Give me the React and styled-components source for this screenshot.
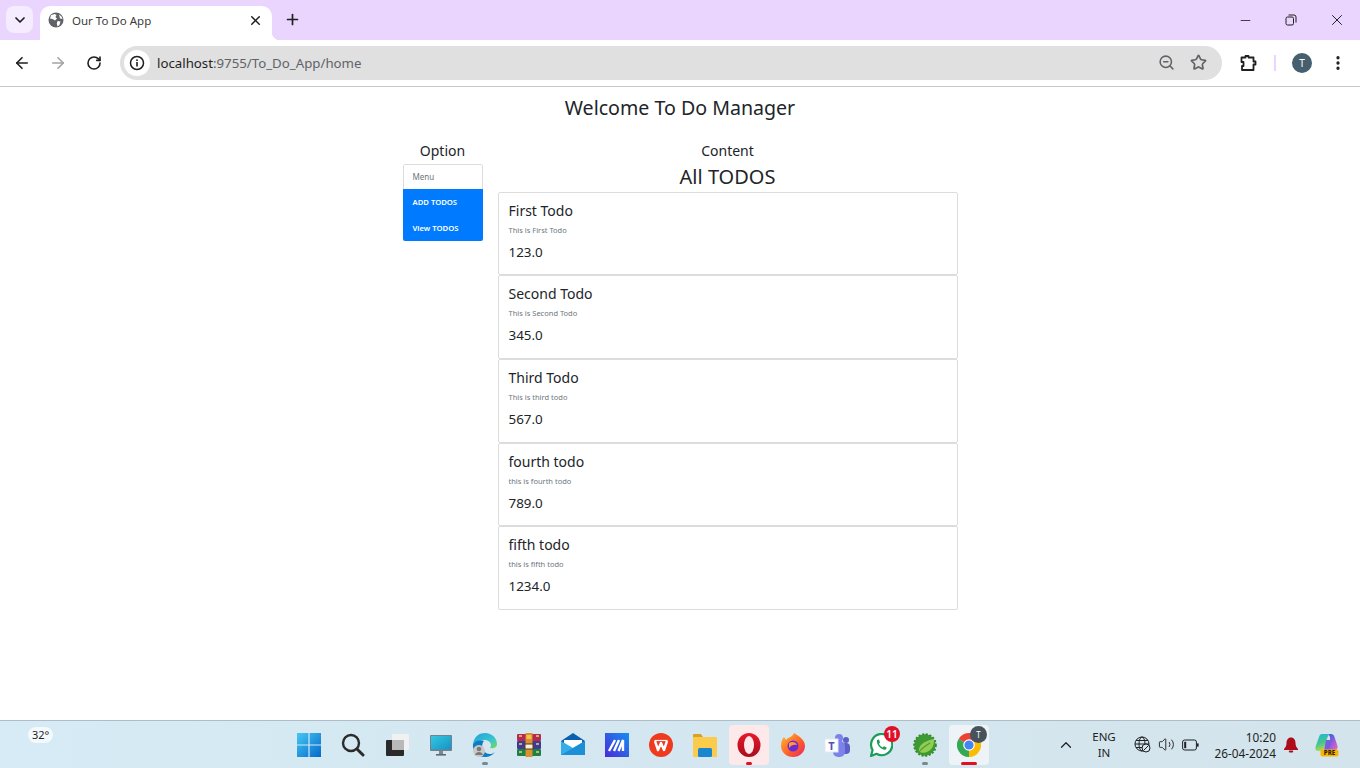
import React from 'react'
import styled, { createGlobalStyle } from 'styled-components'
import { ArrowLeft, ArrowRight, RotateCw, Star, ZoomOut, EllipsisVertical, Plus, X, Minus, ChevronDown, ChevronUp, Volume2 } from 'lucide-react'

const GlobalStyle = createGlobalStyle`
    html, body {
        margin: 0;
        padding: 0;
        background: #fff;
        font-family: "Noto Sans", "Open Sans", "Liberation Sans", sans-serif;
        color: #212529;
    }
`

const todos = [
    { title: 'First Todo', text: 'This is First Todo', price: '123.0' },
    { title: 'Second Todo', text: 'This is Second Todo', price: '345.0' },
    { title: 'Third Todo', text: 'This is third todo', price: '567.0' },
    { title: 'fourth todo', text: 'this is fourth todo', price: '789.0' },
    { title: 'fifth todo', text: 'this is fifth todo', price: '1234.0' },
]

export default function App() {
    return (
        <Screen>
            <GlobalStyle />
            <TabStrip>
                <TabSearch><ChevronDown size={16} strokeWidth={2.6} color="#1f1f1f" /></TabSearch>
                <Tab>
                    <GlobeFilled />
                    <TabTitle>Our To Do App</TabTitle>
                    <X size={15} strokeWidth={2.4} color="#1f1f1f" />
                </Tab>
                <NewTab><Plus size={17} strokeWidth={2.4} color="#1f1f1f" /></NewTab>
                <WindowControls>
                    <WindowButton><Minus size={15} strokeWidth={1.3} color="#1f1f1f" /></WindowButton>
                    <WindowButton><RestoreIcon /></WindowButton>
                    <WindowButton><X size={18} strokeWidth={1.3} color="#1f1f1f" /></WindowButton>
                </WindowControls>
            </TabStrip>
            <Toolbar>
                <NavButton><ArrowLeft size={18} strokeWidth={2.2} color="#1f1f1f" /></NavButton>
                <NavButton><ArrowRight size={18} strokeWidth={2.2} color="#a3a3a3" /></NavButton>
                <NavButton><RotateCw size={16} strokeWidth={2.4} color="#1f1f1f" /></NavButton>
                <Omnibox>
                    <InfoChip><InfoIcon /></InfoChip>
                    <Url>localhost<UrlRest>:9755/To_Do_App/home</UrlRest></Url>
                    <OmniIcon><ZoomOut size={17} strokeWidth={2.2} color="#5f6368" /></OmniIcon>
                    <OmniIcon><Star size={17} strokeWidth={2.4} color="#5f6368" /></OmniIcon>
                </Omnibox>
                <ExtensionSlot><PuzzleIcon /></ExtensionSlot>
                <Separator />
                <Avatar>T</Avatar>
                <MenuSlot><EllipsisVertical size={18} strokeWidth={2.4} color="#1f1f1f" /></MenuSlot>
            </Toolbar>

            <Page>
                <Heading>Welcome To Do Manager</Heading>
                <Columns>
                    <OptionColumn>
                        <ColumnTitle>Option</ColumnTitle>
                        <Menu>
                            <MenuItem>Menu</MenuItem>
                            <MenuItem $active>ADD TODOS</MenuItem>
                            <MenuItem $active>View TODOS</MenuItem>
                        </Menu>
                    </OptionColumn>
                    <ContentColumn>
                        <ColumnTitle>Content</ColumnTitle>
                        <ListTitle>All TODOS</ListTitle>
                        <CardList>
                            {todos.map((todo) => (
                                <Card key={todo.title}>
                                    <CardTitle>{todo.title}</CardTitle>
                                    <CardText>{todo.text}</CardText>
                                    <CardPrice>{todo.price}</CardPrice>
                                </Card>
                            ))}
                        </CardList>
                    </ContentColumn>
                </Columns>
            </Page>

            <Taskbar>
                <Weather><WeatherPill>32°</WeatherPill></Weather>
                <TaskIcons>
                    <TaskButton><WindowsIcon /></TaskButton>
                    <TaskButton><SearchIcon /></TaskButton>
                    <TaskButton><TaskViewIcon /></TaskButton>
                    <TaskButton><MonitorIcon /></TaskButton>
                    <TaskButton><EdgeIcon /><Running /></TaskButton>
                    <TaskButton><RarIcon /></TaskButton>
                    <TaskButton><MailIcon /></TaskButton>
                    <TaskButton><MaIcon /></TaskButton>
                    <TaskButton><WpsIcon /></TaskButton>
                    <TaskButton><FolderIcon /></TaskButton>
                    <TaskButton $tint="#fde8ea"><OperaIcon /><Running $red /></TaskButton>
                    <TaskButton><FirefoxIcon /></TaskButton>
                    <TaskButton><TeamsIcon /></TaskButton>
                    <TaskButton><WhatsappIcon /><CountBadge>11</CountBadge></TaskButton>
                    <TaskButton><SpringIcon /><Running /></TaskButton>
                    <TaskButton $tint="#eef3f7"><ChromeIcon /><ChromeBadge>T</ChromeBadge><Running $red $wide /></TaskButton>
                </TaskIcons>
                <Tray>
                    <TrayChevron><ChevronUp size={18} strokeWidth={1.6} color="#1f1f1f" /></TrayChevron>
                    <Lang>ENG<br />IN</Lang>
                    <TrayGroup>
                        <NetIcon />
                        <Volume2 size={17} strokeWidth={1.3} color="#1f1f1f" />
                        <BatteryIcon />
                    </TrayGroup>
                    <Clock>10:20<br />26-04-2024</Clock>
                    <BellIcon />
                    <CopilotSlot><CopilotIcon /></CopilotSlot>
                </Tray>
            </Taskbar>
        </Screen>
    )
}

const GlobeFilled = () => (
    <svg width="16" height="16" viewBox="0 0 16 16">
        <circle cx="8" cy="8" r="7.5" fill="#5f6368" />
        <path d="M3 3.2 L6.5 2 L8.5 3 L7.5 5 L9 6.5 L7 8.5 L4.5 7 L2 6.5 Z M9.5 9 L12.5 9.5 L11.5 13 L9.5 14.5 L8.8 11.5 Z M11 2.5 L13.5 4.5 L14.5 7 L12 6.5 Z" fill="#fff" />
    </svg>
)

const RestoreIcon = () => (
    <svg width="12" height="12" viewBox="0 0 12 12" fill="none" stroke="#1f1f1f" strokeWidth="1">
        <rect x="1" y="3" width="7.5" height="8" rx="1.5" />
        <path d="M3.5 1 H9 A2 2 0 0 1 11 3 V8.5" />
    </svg>
)

const InfoIcon = () => (
    <svg width="16" height="16" viewBox="0 0 16 16" fill="none">
        <circle cx="8" cy="8" r="6.5" stroke="#1f1f1f" strokeWidth="1.5" />
        <rect x="7.2" y="7" width="1.6" height="4.5" fill="#1f1f1f" />
        <rect x="7.2" y="4.4" width="1.6" height="1.6" fill="#1f1f1f" />
    </svg>
)

const PuzzleIcon = () => (
    <svg width="18" height="18" viewBox="0 0 18 18" fill="none" stroke="#1f1f1f" strokeWidth="1.8" strokeLinejoin="round">
        <path d="M2.5 3.5 H6.5 V2 H9.5 V3.5 H14.5 V7.5 H16.5 V10.5 H14.5 V16 H3 V12 H4.5 V8 H2.5 Z" />
    </svg>
)

const WindowsIcon = () => (
    <svg width="24" height="24" viewBox="0 0 24 24">
        <defs>
            <linearGradient id="win" x1="0" y1="0" x2="1" y2="1">
                <stop offset="0" stopColor="#45c8f6" />
                <stop offset="1" stopColor="#0469c9" />
            </linearGradient>
        </defs>
        <path d="M0 0 H11.4 V11.4 H0 Z M12.6 0 H24 V11.4 H12.6 Z M0 12.6 H11.4 V24 H0 Z M12.6 12.6 H24 V24 H12.6 Z" fill="url(#win)" />
    </svg>
)

const SearchIcon = () => (
    <svg width="24" height="24" viewBox="0 0 24 24" fill="none" stroke="#2b2b2b">
        <circle cx="10" cy="10" r="8" strokeWidth="2.4" />
        <path d="M16 16 L22 22" strokeWidth="3" strokeLinecap="round" />
    </svg>
)

const TaskViewIcon = () => (
    <svg width="24" height="24" viewBox="0 0 24 24">
        <rect x="1" y="7" width="18" height="16" rx="1" fill="#2a2a2a" />
        <rect x="7" y="1" width="17" height="16" rx="1" fill="#f1f1f1" />
        <rect x="7" y="7" width="12" height="10" fill="#b9b9b9" />
    </svg>
)

const MonitorIcon = () => (
    <svg width="24" height="24" viewBox="0 0 24 24">
        <defs>
            <linearGradient id="mon" x1="0" y1="0" x2="1" y2="1">
                <stop offset="0" stopColor="#35c7e0" />
                <stop offset="1" stopColor="#1593c6" />
            </linearGradient>
        </defs>
        <rect x="1" y="2" width="22" height="16" rx="1" fill="#75808a" />
        <rect x="2" y="3" width="20" height="13.5" fill="url(#mon)" />
        <rect x="10" y="18" width="4" height="3" fill="#7c8790" />
        <rect x="7" y="21" width="10" height="1.6" fill="#5f6a73" />
    </svg>
)

const EdgeIcon = () => (
    <svg width="26" height="26" viewBox="0 0 26 26">
        <defs>
            <linearGradient id="edg" x1="0" y1="0" x2="1" y2="1">
                <stop offset="0" stopColor="#1f9fd8" />
                <stop offset="0.6" stopColor="#37c6d0" />
                <stop offset="1" stopColor="#7ed957" />
            </linearGradient>
        </defs>
        <path d="M1 12 C2 4 8 1 13 1 C20 1 25 6 25 12 C25 16 21 17 18 16 C21 12 17 8 13 8 C7 8 3 10 1 12 Z" fill="url(#edg)" />
        <path d="M1 12 C3 9 8 7 12 9 C9 12 10 18 14 21 C17 23 21 22 23 20 C20 24 16 25 13 25 C6 25 0 19 1 12 Z" fill="#0c7cc4" />
        <circle cx="7" cy="19" r="6" fill="#c9c9c9" />
        <circle cx="7" cy="17" r="2.3" fill="#7a7a7a" />
        <path d="M3 23 C4 19 10 19 11 23 Z" fill="#7a7a7a" />
    </svg>
)

const RarIcon = () => (
    <svg width="24" height="24" viewBox="0 0 24 24">
        <rect x="0" y="1" width="24" height="7" rx="1" fill="#b32b4f" />
        <rect x="0" y="8" width="24" height="8" rx="1" fill="#3f3a94" />
        <rect x="0" y="16" width="24" height="7" rx="1" fill="#1f7f45" />
        <path d="M2 3 H5 M19 3 H22 M2 11 H5 M19 11 H22 M2 19 H5 M19 19 H22" stroke="#e6d27a" strokeWidth="1.4" />
        <rect x="8.5" y="0" width="7" height="24" fill="#d9922f" />
        <rect x="9.5" y="2" width="5" height="4" fill="#f0c34a" />
        <rect x="8" y="11" width="8" height="5" fill="#f5efe0" stroke="#5a3a12" strokeWidth="1" />
    </svg>
)

const MailIcon = () => (
    <svg width="24" height="24" viewBox="0 0 24 24">
        <path d="M0 8 L12 0 L24 8 V10 H0 Z" fill="#0a5fae" />
        <path d="M3 7 H21 V13 L12 18 L3 13 Z" fill="#fff" />
        <path d="M0 8 L12 15 L24 8 V22 H0 Z" fill="#33aee8" />
        <path d="M0 22 L24 8 V22 Z" fill="#1d8fd4" />
    </svg>
)

const MaIcon = () => (
    <svg width="24" height="24" viewBox="0 0 24 24">
        <defs>
            <linearGradient id="ma" x1="0" y1="1" x2="1" y2="0">
                <stop offset="0" stopColor="#4a2bd9" />
                <stop offset="1" stopColor="#1590f0" />
            </linearGradient>
        </defs>
        <rect width="24" height="24" fill="url(#ma)" />
        <path d="M4 18 L10 7 M9 18 L14 7 M13.5 18 L18 7 V18" fill="none" stroke="#fff" strokeWidth="2.4" />
    </svg>
)

const WpsIcon = () => (
    <svg width="24" height="24" viewBox="0 0 24 24">
        <circle cx="12" cy="12" r="12" fill="#ee3b1f" />
        <path d="M6 8 L9 17 L12 10 L15 17 L18 8" fill="none" stroke="#fff" strokeWidth="2.4" strokeLinejoin="round" />
        <path d="M5.5 7.5 H18.5" stroke="#fff" strokeWidth="1.2" />
    </svg>
)

const FolderIcon = () => (
    <svg width="24" height="24" viewBox="0 0 24 24">
        <path d="M0 2 A1 1 0 0 1 1 1 H8 L10 4 V8 H0 Z" fill="#d9a321" />
        <rect x="0" y="4" width="24" height="20" rx="1" fill="#fbcb4c" />
        <rect x="5" y="15" width="14" height="9" rx="1.5" fill="#1a86d0" />
    </svg>
)

const OperaIcon = () => (
    <svg width="24" height="24" viewBox="0 0 24 24">
        <defs>
            <linearGradient id="ope" x1="0" y1="0" x2="0" y2="1">
                <stop offset="0" stopColor="#e8182a" />
                <stop offset="1" stopColor="#a80d1c" />
            </linearGradient>
        </defs>
        <ellipse cx="12" cy="12" rx="11.5" ry="12" fill="url(#ope)" />
        <ellipse cx="12" cy="12" rx="5" ry="9" fill="#fde8ea" />
    </svg>
)

const FirefoxIcon = () => (
    <svg width="24" height="24" viewBox="0 0 24 24">
        <defs>
            <linearGradient id="ffx" x1="0" y1="0" x2="1" y2="1">
                <stop offset="0" stopColor="#ffbd2e" />
                <stop offset="0.6" stopColor="#ff5a2b" />
                <stop offset="1" stopColor="#e3246e" />
            </linearGradient>
        </defs>
        <path d="M13 0 C18 3 24 7 24 13 A12 11 0 0 1 0 13 C0 9 1 6 3 4 L5 7 C7 4 12 4 13 0 Z" fill="url(#ffx)" />
        <circle cx="12" cy="13" r="5.5" fill="#6b2bd1" />
        <path d="M8 10 C11 8 15 9 16 12 C13 11 10 12 8 15 Z" fill="#ff9a3c" />
    </svg>
)

const TeamsIcon = () => (
    <svg width="26" height="24" viewBox="0 0 26 24">
        <circle cx="15" cy="5" r="4" fill="#7b83eb" />
        <circle cx="22" cy="7" r="3" fill="#5b5fc7" />
        <rect x="17" y="10" width="9" height="11" rx="4" fill="#5b5fc7" />
        <rect x="9" y="8" width="12" height="16" rx="5" fill="#7b83eb" />
        <rect x="1" y="6" width="13" height="13" fill="#fff" stroke="#e4e6f7" />
        <text x="7.5" y="16.5" fontSize="11" fontWeight="700" fontFamily="Noto Sans" textAnchor="middle" fill="#4b53bc">T</text>
    </svg>
)

const WhatsappIcon = () => (
    <svg width="24" height="24" viewBox="0 0 24 24" fill="none">
        <path d="M2 23 L3.6 17 A10.6 10.6 0 1 1 7.5 20.8 Z" stroke="#1b9c58" strokeWidth="2.2" strokeLinejoin="round" fill="#fff" />
        <path d="M8 7 L10 6.6 L11 9.4 L10 10.8 C10.8 12.6 12 13.8 13.6 14.4 L15 13.2 L17.6 14.6 L17 16.6 C12.6 17.6 7 12 8 7 Z" fill="#1b9c58" />
    </svg>
)

const SpringIcon = () => (
    <svg width="24" height="24" viewBox="0 0 24 24">
        <circle cx="12" cy="12" r="10.6" fill="#2f8a2a" stroke="#2f8a2a" strokeWidth="2.4" strokeDasharray="2 1.6" />
        <circle cx="12" cy="12" r="10.4" fill="#3d9a33" />
        <path d="M6 19 C5 12 11 8 21 6 C22 15 15 22 6 19 Z" fill="#8fce52" />
        <path d="M6 19 C9 15 12 13 17 10" stroke="#4f9a30" strokeWidth="1.2" fill="none" />
    </svg>
)

const ChromeIcon = () => (
    <svg width="24" height="24" viewBox="0 0 24 24">
        <path d="M12 12 L1.6 6 A12 12 0 0 1 22.4 6 Z" fill="#ea4335" />
        <path d="M12 12 L22.4 6 A12 12 0 0 1 12 24 Z" fill="#fbbc04" />
        <path d="M12 12 L12 24 A12 12 0 0 1 1.6 6 Z" fill="#34a853" />
        <circle cx="12" cy="12" r="5.8" fill="#fff" />
        <circle cx="12" cy="12" r="4.6" fill="#4285f4" />
    </svg>
)

const NetIcon = () => (
    <svg width="17" height="17" viewBox="0 0 17 17" fill="none" stroke="#1f1f1f" strokeWidth="1">
        <circle cx="8" cy="8" r="7" />
        <ellipse cx="8" cy="8" rx="3" ry="7" />
        <path d="M1 8 H15 M2 4.5 H14 M2 11.5 H9" />
        <circle cx="12" cy="12" r="4" fill="#d3e8f1" />
        <path d="M9.5 14.5 L14.5 9.5" />
    </svg>
)

const BatteryIcon = () => (
    <svg width="17" height="12" viewBox="0 0 17 12" fill="none">
        <rect x="0.6" y="1" width="13.8" height="10" rx="2" stroke="#1f1f1f" strokeWidth="1" />
        <rect x="2.2" y="2.8" width="2" height="6.4" fill="#1f1f1f" />
        <rect x="15" y="4.4" width="1.6" height="3.2" fill="#1f1f1f" />
    </svg>
)

const BellIcon = () => (
    <svg width="16" height="16" viewBox="0 0 16 16">
        <path d="M8 0.5 C11 0.5 12.5 3 12.5 6 C12.5 9 13.5 10.5 15 12 V13 H1 V12 C2.5 10.5 3.5 9 3.5 6 C3.5 3 5 0.5 8 0.5 Z" fill="#ad0c1a" />
        <rect x="5.8" y="13.6" width="4.4" height="2" rx="1" fill="#ad0c1a" />
    </svg>
)

const CopilotIcon = () => (
    <svg width="24" height="24" viewBox="0 0 24 24">
        <defs>
            <linearGradient id="cop1" x1="0.2" y1="0" x2="0.5" y2="1">
                <stop offset="0" stopColor="#25b4dc" />
                <stop offset="0.55" stopColor="#43c88a" />
                <stop offset="1" stopColor="#c7d84a" />
            </linearGradient>
            <linearGradient id="cop2" x1="0" y1="0" x2="1" y2="1">
                <stop offset="0" stopColor="#1f62d8" />
                <stop offset="0.55" stopColor="#9a5ce0" />
                <stop offset="1" stopColor="#f06cb0" />
            </linearGradient>
        </defs>
        <path d="M13 1 H16 C18 1 19 2 19.5 4 L22.5 13 C23 15 22 17 20 17 H12 L15 7 C15.5 5 15 3 13 1 Z" fill="url(#cop2)" />
        <path d="M7 1 H15 C13 2 12.5 4 12 6 L9.5 14 C9 16 8 18 5 18 H3 C1 18 0 16 0.5 14 L4 4 C4.5 2 5.5 1 7 1 Z" fill="url(#cop1)" />
        <path d="M11 7 L17 7 L14 17 L9 17 Z" fill="#7b5be0" />
        <rect x="5.5" y="16.5" width="18" height="7" rx="2" fill="#f7b500" />
        <text x="14.5" y="22.4" fontSize="6.2" fontWeight="800" fontFamily="Noto Sans" textAnchor="middle" fill="#2b2000">PRE</text>
    </svg>
)

const Screen = styled.div`
    display: flex;
    flex-direction: column;
    width: 1360px;
    height: 768px;
    overflow: hidden;
`

const TabStrip = styled.div`
    display: flex;
    flex: none;
    align-items: flex-end;
    height: 40px;
    padding-left: 6px;
    background: #e9d5fe;
`

const TabSearch = styled.div`
    display: flex;
    align-items: center;
    justify-content: center;
    width: 27px;
    height: 27px;
    margin: 0 7px 7px 0;
    border-radius: 8px;
    background: #f6ecff;
`

const Tab = styled.div`
    position: relative;
    display: flex;
    align-items: center;
    width: 232px;
    height: 34px;
    padding: 0 9px 6px 8px;
    box-sizing: border-box;
    border-radius: 10px 10px 0 0;
    background: #fff;

    &::after {
        content: '';
        position: absolute;
        right: -8px;
        bottom: 0;
        width: 8px;
        height: 8px;
        background: radial-gradient(circle at 100% 0, transparent 8px, #fff 8.5px);
    }
`

const TabTitle = styled.span`
    flex: 1;
    margin-left: 8px;
    font-size: 11.5px;
    color: #3c3c3c;
`

const NewTab = styled.div`
    display: flex;
    align-items: center;
    margin: 0 0 12px 12px;
`

const WindowControls = styled.div`
    display: flex;
    align-self: stretch;
    margin-left: auto;
`

const WindowButton = styled.div`
    display: flex;
    align-items: center;
    justify-content: center;
    width: 46px;
`

const Toolbar = styled.div`
    display: flex;
    flex: none;
    align-items: center;
    height: 47px;
    padding: 0 0 1px 4px;
    box-sizing: border-box;
    border-bottom: 1px solid #c7c7c7;
    border-radius: 8px 8px 0 0;
    background: #fff;
`

const NavButton = styled.div`
    display: flex;
    align-items: center;
    justify-content: center;
    width: 36px;
`

const Omnibox = styled.div`
    display: flex;
    align-items: center;
    width: 1102px;
    height: 34px;
    margin-left: 8px;
    padding: 0 8px 0 4px;
    box-sizing: border-box;
    border-radius: 17px;
    background: #e0e0e0;
`

const InfoChip = styled.div`
    display: flex;
    align-items: center;
    justify-content: center;
    width: 26px;
    height: 26px;
    border-radius: 50%;
    background: #fff;
`

const Url = styled.span`
    flex: 1;
    margin-left: 7px;
    font-size: 13.25px;
    color: #1f1f1f;
`

const UrlRest = styled.span`
    color: #5f6368;
`

const OmniIcon = styled.div`
    display: flex;
    justify-content: center;
    width: 32px;
`

const ExtensionSlot = styled.div`
    display: flex;
    justify-content: center;
    width: 52px;
`

const Separator = styled.div`
    width: 2px;
    height: 16px;
    background: #e9d5fe;
`

const Avatar = styled.div`
    display: flex;
    align-items: center;
    justify-content: center;
    width: 20px;
    height: 20px;
    margin-left: 16px;
    border-radius: 50%;
    font-size: 10px;
    color: #fff;
    background: #455f6e;
`

const MenuSlot = styled.div`
    display: flex;
    justify-content: center;
    width: 40px;
    margin-left: 6px;
`

const Page = styled.main`
    flex: 1;
    min-height: 0;
    background: #fff;
`

const Heading = styled.h1`
    margin: 6px 0 0;
    font-size: 19.6px;
    font-weight: 400;
    line-height: 29px;
    text-align: center;
`

const Columns = styled.div`
    display: flex;
    justify-content: center;
    gap: 15px;
    margin-top: 19px;
`

const OptionColumn = styled.div`
    width: 80px;
`

const ContentColumn = styled.div`
    width: 460px;
`

const ColumnTitle = styled.div`
    font-size: 14px;
    line-height: 20px;
    text-align: center;
`

const Menu = styled.div`
    margin-top: 3px;
    border-radius: 2px;
    overflow: hidden;
`

const MenuItem = styled.div`
    height: ${(props) => (props.$active ? '26px' : '25px')};
    padding-left: ${(props) => (props.$active ? '10px' : '9px')};
    box-sizing: border-box;
    border: ${(props) => (props.$active ? 'none' : '1px solid #dcdcdc')};
    border-bottom: none;
    border-radius: ${(props) => (props.$active ? '0' : '2px 2px 0 0')};
    font-size: ${(props) => (props.$active ? '7.7px' : '8px')};
    font-weight: ${(props) => (props.$active ? 600 : 400)};
    line-height: ${(props) => (props.$active ? '26px' : '24px')};
    color: ${(props) => (props.$active ? '#fff' : '#6c757d')};
    background: ${(props) => (props.$active ? '#007bff' : '#fff')};
`

const ListTitle = styled.div`
    margin-top: 4px;
    font-size: 20px;
    line-height: 24px;
    text-align: center;
`

const CardList = styled.div`
    display: flex;
    flex-direction: column;
    margin-top: 2.9px;
`

const Card = styled.div`
    height: 83.55px;
    padding: 8px 9px 0 10px;
    box-sizing: border-box;
    border: 1px solid #dcdcdc;
    border-radius: 2px;
    background: #fff;
`

const CardTitle = styled.div`
    font-size: 14px;
    line-height: 20px;
`

const CardText = styled.div`
    margin-top: 3px;
    font-size: 7.5px;
    line-height: 12px;
    color: #6c757d;
`

const CardPrice = styled.div`
    margin-top: 6px;
    font-size: 13.4px;
    line-height: 20px;
`

const Taskbar = styled.footer`
    display: flex;
    flex: none;
    align-items: center;
    height: 48px;
    box-sizing: border-box;
    border-top: 1px solid #aebdc7;
    background: linear-gradient(90deg, #d6ebf5, #d4e6ef 60%, #d3e4ec);
`

const Weather = styled.div`
    width: 287px;
    align-self: flex-start;
    padding: 1px 0 0 28px;
    box-sizing: border-box;
`

const WeatherPill = styled.span`
    display: inline-block;
    padding: 0 4px;
    font-size: 11px;
    line-height: 16px;
    border-radius: 8px;
    background: #f4f9fb;
`

const TaskIcons = styled.div`
    display: flex;
`

const TaskButton = styled.div`
    position: relative;
    display: flex;
    align-items: center;
    justify-content: center;
    width: 40px;
    height: 40px;
    margin: 0 2px;
    border-radius: 4px;
    background: ${(props) => props.$tint || 'transparent'};
`

const Running = styled.span`
    position: absolute;
    bottom: 0;
    left: 50%;
    width: ${(props) => (props.$wide ? '16px' : '6px')};
    height: 3px;
    border-radius: 2px;
    transform: translateX(-50%);
    background: ${(props) => (props.$red ? '#e01020' : '#7b8790')};
`

const CountBadge = styled.span`
    position: absolute;
    top: 1px;
    right: 1px;
    width: 16px;
    height: 16px;
    border-radius: 50%;
    font-size: 10px;
    font-weight: 600;
    line-height: 16px;
    text-align: center;
    color: #fff;
    background: #e0102a;
`

const ChromeBadge = styled.span`
    position: absolute;
    top: 1px;
    right: 2px;
    width: 17px;
    height: 17px;
    border-radius: 50%;
    font-size: 8px;
    line-height: 17px;
    text-align: center;
    color: #fff;
    background: #47525a;
`

const Tray = styled.div`
    display: flex;
    flex: 1;
    align-items: center;
    min-width: 0;
`

const TrayChevron = styled.div`
    display: flex;
    margin-left: 66px;
`

const Lang = styled.div`
    width: 40px;
    margin-left: 9px;
    font-size: 11.5px;
    line-height: 16px;
    text-align: center;
    color: #1f1f1f;
`

const TrayGroup = styled.div`
    display: flex;
    align-items: center;
    gap: 7px;
    margin-left: 10px;
`

const Clock = styled.div`
    width: 66px;
    margin: 0 7px 0 11px;
    font-size: 11.8px;
    line-height: 16px;
    text-align: right;
    color: #1f1f1f;
`

const CopilotSlot = styled.div`
    display: flex;
    margin-left: 16px;
`
